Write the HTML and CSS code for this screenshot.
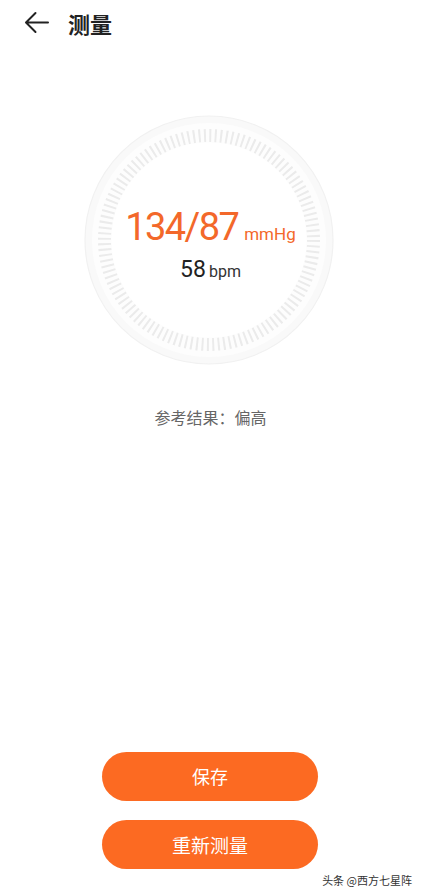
FILE: index.html
```html
<!DOCTYPE html>
<html lang="zh-CN">
<head>
<meta charset="utf-8">
<title>测量</title>
<link rel="stylesheet" href="styles.css">
</head>
<body>
<div class="page">
  <header class="header">
    <svg class="back" width="26" height="24" viewBox="0 0 26 24" aria-hidden="true">
      <path d="M24 11.5H2.5M11.5 2L2 11.5L11.5 21" fill="none" stroke="#222" stroke-width="2" stroke-linecap="round" stroke-linejoin="round"/>
    </svg>
    <h1 class="title">测量</h1>
  </header>

  <section class="dial">
    <svg class="dial-art" width="250" height="250" viewBox="0 0 250 250" aria-hidden="true">
      <defs>
        <filter id="soft" x="-5%" y="-5%" width="110%" height="110%">
          <feGaussianBlur stdDeviation="0.5"/>
        </filter>
      </defs>
      <circle cx="125" cy="125" r="124" fill="#f9f9f9" stroke="#f1f1f1" stroke-width="1.2"/>
      <circle cx="125" cy="125" r="117" fill="#fdfdfd"/>
      <circle cx="125" cy="125" r="104.5" fill="none" stroke="#ebebeb" stroke-width="13" stroke-dasharray="2 3.47" filter="url(#soft)"/>
      <circle cx="125" cy="125" r="97.5" fill="#ffffff"/>
    </svg>
    <div class="readout">
      <div class="bp"><span class="bp-val">134/87</span><span class="bp-unit">mmHg</span></div>
      <div class="hr"><span class="hr-val">58</span><span class="hr-unit">bpm</span></div>
    </div>
  </section>

  <p class="result">参考结果：偏高</p>

  <div class="actions">
    <button class="btn">保存</button>
    <button class="btn btn-wide">重新测量</button>
  </div>
  <div class="footer"><span class="mark">头条 @西方七星阵</span></div>
</div>
</body>
</html>
```

FILE: styles.css
```css
* { box-sizing: border-box; }
html, body { margin: 0; padding: 0; background: #ffffff; }
body {
  font-family: "Noto Sans CJK SC", "Noto Sans", sans-serif;
  color: #222;
}
.page {
  width: 421px;
  height: 895px;
  display: flex;
  flex-direction: column;
  overflow: hidden;
}
.header {
  height: 46px;
  display: flex;
  align-items: center;
  padding-left: 24px;
}
.back { display: block; flex: none; }
.title {
  margin: 0 0 0 18px;
  font-size: 22px;
  font-weight: 700;
  line-height: 30px;
  color: #222;
}
.dial {
  margin-top: 69px;
  display: grid;
  justify-items: center;
  align-items: center;
}
.dial-art, .readout { grid-area: 1 / 1; }
.dial-art { display: block; margin-right: 4px; }
.readout {
  padding-top: 10px;
  text-align: center;
  font-family: Roboto, "Noto Sans", sans-serif;
}
.bp {
  height: 44px;
  line-height: 44px;
  color: #f3682a;
  white-space: nowrap;
}
.bp-val {
  font-size: 38px;
  letter-spacing: -1.6px;
  font-weight: 400;
}
.bp-unit {
  font-size: 17px;
  margin-left: 6px;
}
.hr {
  margin-top: 6px;
  height: 30px;
  line-height: 30px;
  color: #222;
  white-space: nowrap;
}
.hr-val { font-size: 23px; }
.hr-unit { font-size: 16px; margin-left: 3px; color: #333; }
.result {
  margin: 40px 0 0;
  text-align: center;
  font-size: 16px;
  line-height: 24px;
  color: #666;
}
.actions {
  margin-top: auto;
  display: flex;
  flex-direction: column;
  align-items: center;
  gap: 19px;
}
.btn {
  width: 216px;
  height: 49px;
  border: none;
  border-radius: 25px;
  background: #fc6a22;
  color: #fff;
  font-family: "Noto Sans CJK SC", "Noto Sans", sans-serif;
  font-size: 18px;
  line-height: 49px;
  padding: 0;
  margin-left: -1px;
}
.btn-wide { font-size: 19px; }
.footer {
  height: 26px;
  display: flex;
  justify-content: flex-end;
  align-items: flex-start;
  padding: 4px 9px 0 0;
}
.mark {
  font-size: 11px;
  line-height: 14px;
  color: #333;
  text-shadow: 0 0 2px #fff;
}
```
